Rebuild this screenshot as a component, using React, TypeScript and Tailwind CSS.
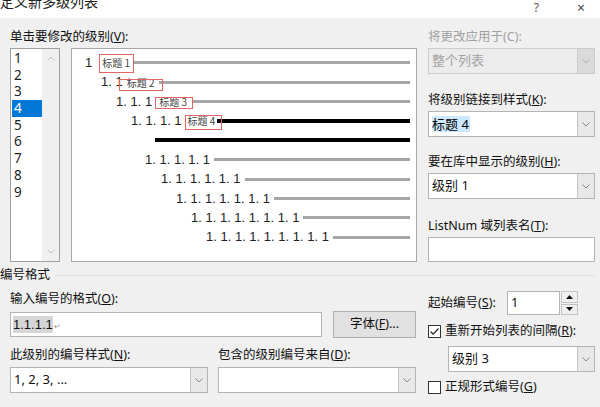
import React from 'react';

// preview rows of the multilevel list
const rows = [
  { pl: 'pl-[13px]', num: '1', label: '标题 1', labelGap: 'ml-[10px]', barGap: 'ml-[4px]', dark: false },
  { pl: 'pl-[29px]', num: '1. 1', label: '标题 2', labelGap: 'ml-[4px]', barGap: 'ml-[5px]', dark: false },
  { pl: 'pl-[44px]', num: '1. 1. 1', label: '标题 3', labelGap: 'ml-[7px]', barGap: 'ml-[5px]', dark: false },
  { pl: 'pl-[59px]', num: '1. 1. 1. 1', label: '标题 4', labelGap: 'ml-[6px]', barGap: 'ml-[2px]', dark: true },
  { pl: 'pl-[83px]', num: '', label: '', labelGap: '', barGap: '', dark: true },
  { pl: 'pl-[73px]', num: '1. 1. 1. 1. 1', label: '', labelGap: '', barGap: 'ml-[4px]', dark: false },
  { pl: 'pl-[89px]', num: '1. 1. 1. 1. 1. 1', label: '', labelGap: '', barGap: 'ml-[4px]', dark: false },
  { pl: 'pl-[104px]', num: '1. 1. 1. 1. 1. 1. 1', label: '', labelGap: '', barGap: 'ml-[4px]', dark: false },
  { pl: 'pl-[119px]', num: '1. 1. 1. 1. 1. 1. 1. 1', label: '', labelGap: '', barGap: 'ml-[4px]', dark: false },
  { pl: 'pl-[134px]', num: '1. 1. 1. 1. 1. 1. 1. 1. 1', label: '', labelGap: '', barGap: 'ml-[4px]', dark: false },
];

// hand-drawn red annotation boxes, relative to the preview box
const marks = [
  'left-[27px] top-[5px] w-[35px] h-[19px]',
  'left-[47px] top-[30px] w-[44px] h-[12px]',
  'left-[83px] top-[48px] w-[38px] h-[12px]',
  'left-[113px] top-[66px] w-[37px] h-[15px]',
];

function Chevron({ color = '#808080' }: { color?: string }) {
  return (
    <svg width="8" height="5" viewBox="0 0 8 5">
      <path d="M0.5 0.5 L4 4 L7.5 0.5" fill="none" stroke={color} strokeWidth="1" />
    </svg>
  );
}

function Combo({
  text,
  width,
  disabled = false,
  selected = false,
}: {
  text: string;
  width: string;
  disabled?: boolean;
  selected?: boolean;
}) {
  return (
    <div
      className={`flex h-[26px] ${width} border ${
        disabled ? 'border-[#cccccc] bg-[#ececec]' : 'border-[#b4b4b4] bg-white'
      }`}
    >
      <div className="flex-1 flex items-center pl-[3px] text-[13px]">
        {selected ? (
          <span className="bg-[#cde8ff] pr-[1px] leading-[16px]">{text}</span>
        ) : (
          <span className={disabled ? 'text-[#a3a3a3]' : 'text-[#111]'}>{text}</span>
        )}
      </div>
      <div
        className={`w-[17px] flex items-center justify-center border-l ${
          disabled ? 'border-[#cccccc] bg-[#dadada]' : 'border-[#c4c4c4] bg-[#e8e8e8]'
        }`}
      >
        <Chevron color={disabled ? '#b0b0b0' : '#888'} />
      </div>
    </div>
  );
}

function Checkbox({ checked }: { checked: boolean }) {
  return (
    <div className="w-[13px] h-[13px] border border-[#333] bg-white flex items-center justify-center">
      {checked && (
        <svg width="11" height="11" viewBox="0 0 11 11">
          <path d="M1.5 5.5 L4.2 8.2 L9.5 2.5" fill="none" stroke="#222" strokeWidth="1.2" />
        </svg>
      )}
    </div>
  );
}

function Label({ children, muted = false }: { children: React.ReactNode; muted?: boolean }) {
  return (
    <div className={`h-[14px] leading-[14px] text-[12.5px] whitespace-nowrap ${muted ? 'text-[#a0a0a0]' : 'text-[#111]'}`}>
      {children}
    </div>
  );
}

export default function App() {
  return (
    <div className="w-[600px] h-[407px] overflow-hidden bg-[#f0f0f0] text-black font-['Noto_Sans','Noto_Sans_CJK_SC',sans-serif]">
      {/* title bar */}
      <div className="h-[18px] bg-white flex items-start overflow-hidden">
        <div className="-mt-[7px] text-[14px] leading-[18px] text-[#222]">定义新多级列表</div>
        <div className="ml-auto text-[12px] leading-[15px] text-[#555]">?</div>
        <div className="ml-[38px] mr-[15px] text-[14px] leading-[15px] text-[#444]">×</div>
      </div>

      {/* top section */}
      <div className="flex pl-[10px] pt-[12px]">
        <div className="w-[407px]">
          <Label>
            单击要修改的级别(<span className="underline">V</span>):
          </Label>
          <div className="mt-[4px] flex gap-[11px]">
            {/* level list */}
            <div className="w-[50px] h-[214px] border border-[#a0a0a0] bg-white flex">
              <div className="w-[31px] pt-[1px] pl-[1px]">
                {['1', '2', '3', '4', '5', '6', '7', '8', '9'].map((n) => (
                  <div
                    key={n}
                    className={`h-[16.7px] leading-[16.7px] pl-[2px] text-[13.5px] ${
                      n === '4' ? 'bg-[#0078d7] text-white' : 'text-[#222]'
                    }`}
                  >
                    {n}
                  </div>
                ))}
              </div>
              <div className="flex-1 bg-[#f0f0f0] flex flex-col items-center justify-between py-[7px]">
                <svg width="8" height="5" viewBox="0 0 8 5">
                  <path d="M0.5 4.5 L4 1 L7.5 4.5" fill="none" stroke="#c2c2c2" strokeWidth="1" />
                </svg>
                <Chevron color="#c2c2c2" />
              </div>
            </div>

            {/* preview */}
            <div className="relative w-[346px] h-[214px] border border-[#a8a8a8] bg-white pt-[4px] pr-[6px] font-['Liberation_Sans','Noto_Sans_CJK_SC',sans-serif]">
              {rows.map((r, i) => (
                <div key={i} className={`flex items-center h-[19.4px] ${r.pl}`}>
                  {r.num && <span className="text-[13px] text-[#222] whitespace-nowrap">{r.num}</span>}
                  {r.label && (
                    <span className={`${r.labelGap} text-[10px] text-[#444] whitespace-nowrap font-['Noto_Sans_CJK_SC',sans-serif]`}>
                      {r.label}
                    </span>
                  )}
                  <div className={`flex-1 ${r.barGap} ${r.dark ? 'h-[4px] bg-black' : 'h-[3px] bg-[#a6a6a6]'}`} />
                </div>
              ))}
              {marks.map((m, i) => (
                <div key={i} className={`absolute ${m} border border-[#e06666]`} />
              ))}
            </div>
          </div>
        </div>

        {/* right column */}
        <div className="ml-[11px] w-[167px]">
          <Label muted>将更改应用于(C):</Label>
          <div className="mt-[4px]">
            <Combo text="整个列表" width="w-[167px]" disabled />
          </div>
          <div className="mt-[19px]">
            <Label>
              将级别链接到样式(<span className="underline">K</span>):
            </Label>
          </div>
          <div className="mt-[4px]">
            <Combo text="标题 4" width="w-[167px]" selected />
          </div>
          <div className="mt-[18px]">
            <Label>
              要在库中显示的级别(<span className="underline">H</span>):
            </Label>
          </div>
          <div className="mt-[4px]">
            <Combo text="级别 1" width="w-[167px]" />
          </div>
          <div className="mt-[20px]">
            <Label>
              ListNum 域列表名(<span className="underline">T</span>):
            </Label>
          </div>
          <div className="mt-[4px] h-[25px] w-[167px] border border-[#b4b4b4] bg-white" />
        </div>
      </div>

      {/* group header */}
      <div className="mt-[6px] flex items-center h-[14px]">
        <div className="text-[12.5px] leading-[14px] text-[#111]">编号格式</div>
        <div className="flex-1 ml-[5px] mr-[5px] h-px bg-[#dcdcdc]" />
      </div>

      {/* bottom section */}
      <div className="flex pl-[10px]">
        <div className="w-[406px]">
          <div className="mt-[10px]">
            <Label>
              输入编号的格式(<span className="underline">O</span>):
            </Label>
          </div>
          <div className="mt-[5px] flex items-center gap-[11px]">
            <div className="w-[312px] h-[25px] border border-[#b4b4b4] bg-white flex items-center pl-[2px]">
              <span className="bg-[#d6d6d6] text-[13px] leading-[17px] text-[#111] font-['Liberation_Sans',sans-serif]">
                1.1.1.1
              </span>
              <span className="text-[8px] text-[#999] ml-[1px] mt-[3px]">↵</span>
            </div>
            <div className="w-[83px] h-[27px] border border-[#b0b0b0] bg-[#e1e1e1] flex items-center justify-center text-[12.5px] text-[#111]">
              字体(<span className="underline">F</span>)...
            </div>
          </div>
          <div className="mt-[10px] flex gap-[10px]">
            <div className="w-[198px]">
              <Label>
                此级别的编号样式(<span className="underline">N</span>):
              </Label>
            </div>
            <div className="w-[198px]">
              <Label>
                包含的级别编号来自(<span className="underline">D</span>):
              </Label>
            </div>
          </div>
          <div className="mt-[5px] flex gap-[10px]">
            <Combo text="1, 2, 3, ..." width="w-[198px]" />
            <Combo text="" width="w-[198px]" />
          </div>
        </div>

        <div className="ml-[12px] w-[167px]">
          <div className="mt-[9px] flex items-center">
            <div className="w-[79px]">
              <Label>
                起始编号(<span className="underline">S</span>):
              </Label>
            </div>
            <div className="flex h-[24px]">
              <div className="w-[53px] border border-[#b4b4b4] bg-white flex items-center pl-[3px] text-[13px] text-[#111]">
                1
              </div>
              <div className="w-[17px] ml-[1px] flex flex-col gap-[1px]">
                <div className="flex-1 border border-[#c4c4c4] bg-[#efefef] flex items-center justify-center">
                  <svg width="7" height="4" viewBox="0 0 7 4">
                    <path d="M0 4 L3.5 0 L7 4 Z" fill="#111" />
                  </svg>
                </div>
                <div className="flex-1 border border-[#c4c4c4] bg-[#efefef] flex items-center justify-center">
                  <svg width="7" height="4" viewBox="0 0 7 4">
                    <path d="M0 0 L3.5 4 L7 0 Z" fill="#111" />
                  </svg>
                </div>
              </div>
            </div>
          </div>
          <div className="mt-[9px] flex items-center gap-[4px]">
            <Checkbox checked />
            <Label>
              重新开始列表的间隔(<span className="underline">R</span>):
            </Label>
          </div>
          <div className="mt-[8px] ml-[20px]">
            <Combo text="级别 3" width="w-[147px]" />
          </div>
          <div className="mt-[8px] flex items-center gap-[4px]">
            <Checkbox checked={false} />
            <Label>
              正规形式编号(<span className="underline">G</span>)
            </Label>
          </div>
        </div>
      </div>
    </div>
  );
}
